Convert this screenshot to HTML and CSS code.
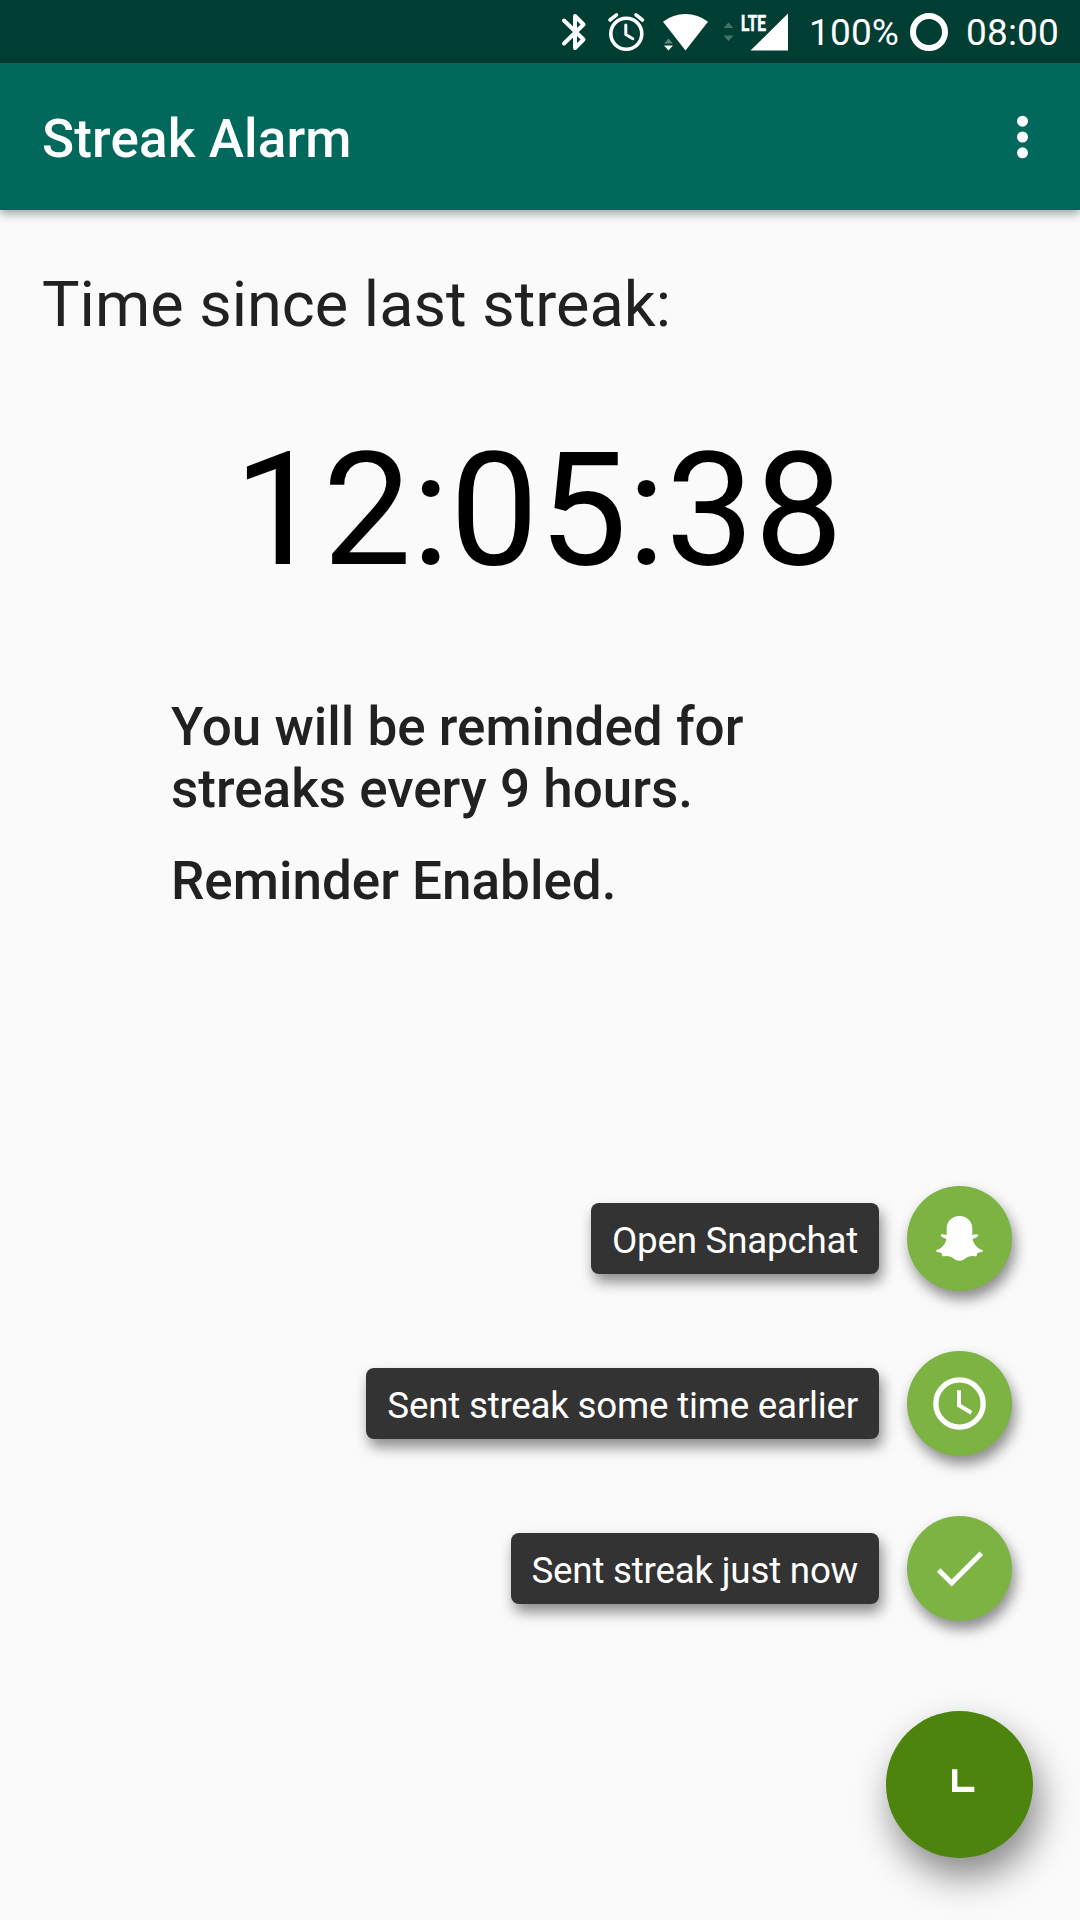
FILE: index.html
```html
<!DOCTYPE html>
<html lang="en">
<head>
<meta charset="utf-8">
<title>Streak Alarm</title>
<link rel="stylesheet" href="styles.css">
</head>
<body>
<div class="screen">
  <div class="status-bar">
    <svg class="icon-bluetooth" width="24" height="40" viewBox="0 0 24 40" aria-hidden="true">
      <path d="M2 8.500 L21.500 27.500 L13 36 V4 L21.500 12.500 L2 31.500" fill="none" stroke="#fff" stroke-width="4" stroke-linecap="round" stroke-linejoin="round"/>
    </svg>
    <svg class="icon-alarm" width="38" height="40" viewBox="0 0 38 40" aria-hidden="true">
      <g fill="none" stroke="#fff" stroke-linecap="round" stroke-linejoin="round">
        <circle cx="18.300" cy="21.800" r="15.500" stroke-width="3.600"/>
        <path d="M17.800 13 V22.500 L24.800 26.700" stroke-width="3"/>
        <path d="M2 8 L8.500 2.800 M34.500 8 L28 2.800" stroke-width="3.600"/>
      </g>
    </svg>
    <svg class="icon-wifi" width="46" height="40" viewBox="0 0 46 40" aria-hidden="true">
      <path d="M0 9.700 Q10 2 22.500 2 Q35 2 45 9.700 L22.500 38.500 Z" fill="#fff"/>
      <path d="M1 31.500 L5.500 26.500 L10 31.500 Z" fill="#5d857d"/>
      <path d="M1 33.500 H10 L5.500 38.500 Z" fill="#fff"/>
    </svg>
    <svg class="icon-signal" width="66" height="40" viewBox="0 0 66 40" aria-hidden="true">
      <path d="M.5 16 L5.500 10.500 L10.500 16 Z M.5 23.500 H10.500 L5.500 29 Z" fill="#457269"/>
      <text class="network" x="18" y="18.500" textLength="25" lengthAdjust="spacingAndGlyphs">LTE</text>
      <path d="M65 1.500 V38.500 H27.500 Z" fill="#fff"/>
    </svg>
    <span class="battery-level">100%</span>
    <svg class="icon-battery" width="38" height="38" viewBox="0 0 38 38" aria-hidden="true">
      <circle cx="19" cy="19" r="16" fill="none" stroke="#fff" stroke-width="6"/>
    </svg>
    <span class="clock">08:00</span>
  </div>

  <header class="app-bar">
    <h1 class="app-title">Streak Alarm</h1>
    <svg class="overflow" width="12" height="44" viewBox="0 0 12 44" fill="#fff" role="img" aria-label="More options">
      <circle cx="5.500" cy="6.200" r="5.500"/><circle cx="5.500" cy="22" r="5.500"/><circle cx="5.500" cy="37.800" r="5.500"/>
    </svg>
  </header>

  <main class="content">
    <p class="heading">Time since last streak:</p>
    <p class="timer">12:05:38</p>
    <div class="reminder">
      <p>You will be reminded for<br>streaks every 9 hours.</p>
      <p>Reminder Enabled.</p>
    </div>
  </main>

  <div class="speed-dial">
    <div class="action">
      <span class="label">Open Snapchat</span>
      <svg class="mini-fab" viewBox="0 0 315 315" aria-hidden="true">
        <path fill="#fff" d="M157.500 90 C181 90 196 107 196 128 V147 C203 147 208 144 211 145 C216 148 212 153 206 155 C201 157 196 157 197 161 C202 177 213 188 227 192 C230 195 226 198 220 199 C212 200 210 202 210 207 C209 212 204 211 198 210 C177 209 175 224 157.500 224 C140 224 138 209 117 210 C111 211 106 212 105 207 C105 202 103 200 95 199 C89 198 85 195 88 192 C102 188 113 177 118 161 C119 157 114 157 109 155 C103 153 99 148 104 145 C107 144 112 147 119 147 V128 C119 107 134 90 157.500 90 Z"/>
      </svg>
    </div>
    <div class="action">
      <span class="label">Sent streak some time earlier</span>
      <svg class="mini-fab" viewBox="0 0 315 315" fill="none" stroke="#fff" aria-hidden="true">
        <circle cx="157.500" cy="157.500" r="71" stroke-width="16"/>
        <path d="M156 118 V163 L193 185" stroke-width="12"/>
      </svg>
    </div>
    <div class="action">
      <span class="label">Sent streak just now</span>
      <svg class="mini-fab" viewBox="0 0 315 315" fill="none" stroke="#fff" aria-hidden="true">
        <path d="M95 162 L134 201 L223 112" stroke-width="15"/>
      </svg>
    </div>
    <svg class="fab" viewBox="0 0 441 441" fill="none" stroke="#fff" aria-hidden="true">
      <path d="M206 175 V235 H265" stroke-width="16"/>
    </svg>
  </div>
</div>
</body>
</html>
```

FILE: styles.css
```css
* {
  box-sizing: border-box;
}

body {
  margin: 0;
  font-family: Roboto, "Liberation Sans", sans-serif;
  background: #fafafa;
  color: #212121;
}

p,
h1 {
  margin: 0;
}

svg {
  display: block;
  flex: none;
  overflow: visible;
}

.screen {
  display: flex;
  flex-direction: column;
  width: 1080px;
  height: 1920px;
  overflow: hidden;
}

.status-bar {
  display: flex;
  flex: none;
  align-items: center;
  justify-content: flex-end;
  height: 63px;
  padding-right: 20px;
  background: #003d33;
  color: #fff;
  font-size: 37px;
  letter-spacing: 0.15px;
  line-height: 63px;
}

.icon-alarm {
  margin-left: 22px;
}

.icon-wifi {
  margin-left: 17px;
}

.icon-signal {
  margin-left: 14px;
}

.network {
  fill: #fff;
  stroke: #fff;
  stroke-width: 0.6px;
  font-size: 22.5px;
  font-weight: 700;
  letter-spacing: 0;
}

.battery-level {
  width: 90px;
  margin-left: 20px;
}

.icon-battery {
  margin-left: 11px;
}

.clock {
  width: 94px;
  margin-left: 18px;
}

.battery-level,
.clock {
  padding-top: 2px;
  white-space: nowrap;
}

.app-bar {
  display: flex;
  flex: none;
  align-items: center;
  justify-content: space-between;
  height: 147px;
  padding: 0 51px 0 42px;
  background: #00695b;
  color: #fff;
  box-shadow: 0 4px 9px rgba(0, 0, 0, 0.35);
}

.app-title {
  padding-top: 5px;
  font-size: 53px;
  font-weight: 500;
  letter-spacing: 0.15px;
}

.content {
  flex: 1;
  padding: 58px 42px 0;
}

.heading {
  font-size: 63px;
  line-height: 74px;
}

.timer {
  margin-top: 76px;
  padding-right: 3px;
  color: #000;
  font-size: 158px;
  line-height: 184px;
  text-align: center;
}

.reminder {
  display: flex;
  flex-direction: column;
  gap: 30px;
  margin-top: 94px;
  padding-left: 129px;
  font-size: 53px;
  font-weight: 500;
  line-height: 62px;
}

.speed-dial {
  display: flex;
  flex: none;
  flex-direction: column;
  align-items: flex-end;
  gap: 60px;
  padding: 0 47px 62px 0;
}

.action {
  display: flex;
  align-items: center;
  gap: 28px;
  padding-right: 21px;
}

.label {
  height: 71px;
  padding: 2px 21px 0;
  border-radius: 8px;
  background: #333;
  box-shadow: 3px 8px 14px rgba(0, 0, 0, 0.45);
  color: #fff;
  font-size: 36.75px;
  letter-spacing: -0.23px;
  line-height: 71px;
  white-space: nowrap;
}

.mini-fab {
  width: 105px;
  height: 105px;
  border-radius: 50%;
  background: #7cb342;
  box-shadow: 3px 8px 14px rgba(0, 0, 0, 0.45);
}

.fab {
  width: 147px;
  height: 147px;
  margin-top: 30px;
  border-radius: 50%;
  background: #4c840d;
  box-shadow: 6px 19px 36px rgba(0, 0, 0, 0.46);
}
```
